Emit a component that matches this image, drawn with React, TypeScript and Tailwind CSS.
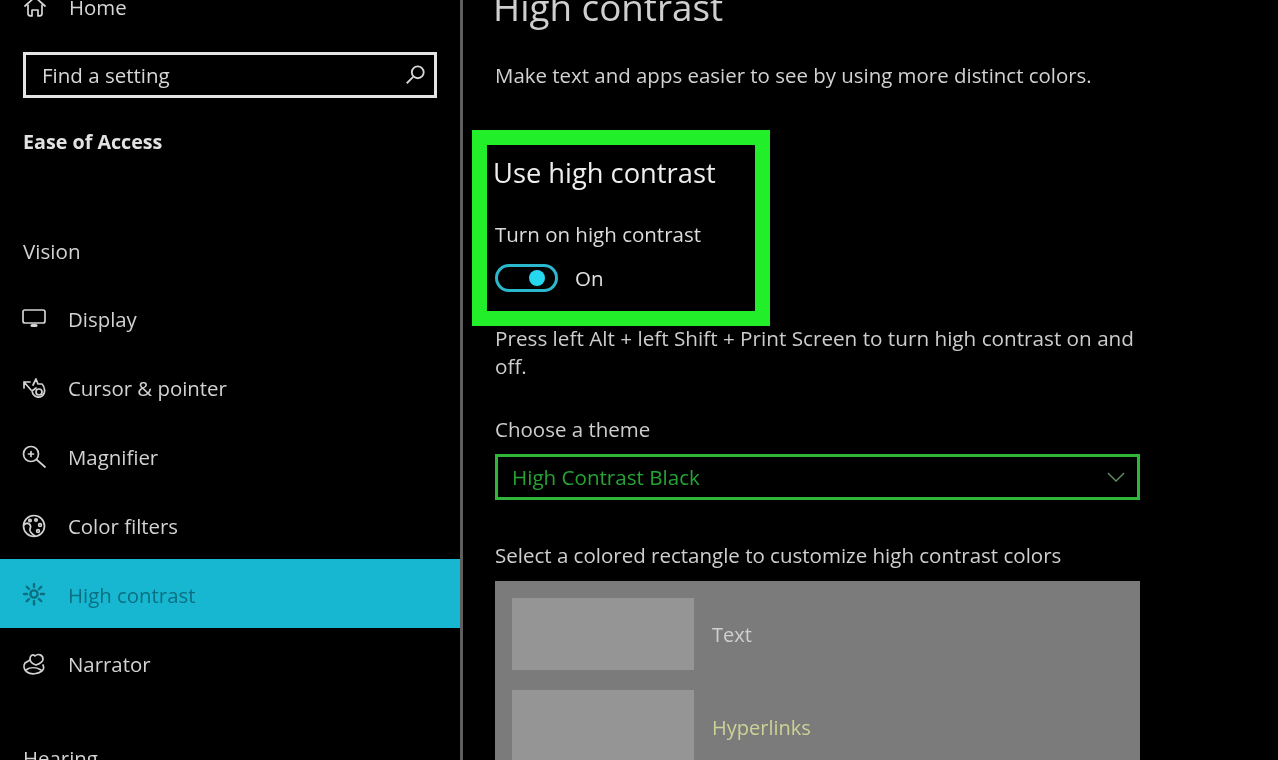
import React from "react";

const font = { fontFamily: '"Open Sans", "Noto Sans", sans-serif' };

const Svg = ({ children, className = "" }: { children: React.ReactNode; className?: string }) => (
  <svg viewBox="0 0 24 24" fill="none" stroke="currentColor" strokeWidth="1.7" strokeLinecap="round" strokeLinejoin="round" className={"w-[24px] h-[24px] shrink-0 " + className}>
    {children}
  </svg>
);

const HomeIcon = () => (
  <Svg><path d="M2 11 L12 2 L22 11" /><path d="M5 10 V19 C5 21 7 21 9 21 V15 H15 V21 C17 21 19 21 19 19 V10" /></Svg>
);
const DisplayIcon = () => (
  <Svg>
    <rect x="1" y="3" width="22" height="13" rx="2" />
    <path d="M10 18.5 H14" strokeWidth="3" />
  </Svg>
);
const CursorIcon = () => (
  <Svg>
    <path d="M2 6 L9 14 M2 6 V12 M2 6 H8" />
    <path d="M11 9 L14 3 L16 8 L20 8 C23 11 24 17 20 20 C17 22 13 21 11 18 L10 15 L14 12" />
    <circle cx="17" cy="16" r="3" />
  </Svg>
);
const MagnifierIcon = () => (
  <Svg>
    <circle cx="9" cy="9" r="7.5" />
    <path d="M14.5 14.5 L23 22" />
    <path d="M9 6.5 V11.5 M6.5 9 H11.5" />
  </Svg>
);
const PaletteIcon = () => (
  <Svg>
    <circle cx="12" cy="12" r="10.5" />
    <path d="M2 11 C6 7 10 11 8 15 C7 18 10 20 13 22" />
    <circle cx="8" cy="6.5" r="1.2" /><circle cx="14" cy="6" r="1.2" /><circle cx="18" cy="11" r="1.4" /><circle cx="16" cy="17" r="1.4" />
  </Svg>
);
const SunIcon = () => (
  <svg viewBox="0 0 24 24" fill="none" stroke="currentColor" strokeWidth="2.4" strokeLinecap="round" className="w-[24px] h-[24px] shrink-0">
    <circle cx="12" cy="11" r="3.6" />
    <path d="M12 1 V4 M12 18 V21.5 M2 11 H5 M19 11 H22 M4.8 3.8 L7 6 M17 16 L19.2 18.2 M4.8 18.2 L7 16 M17 6 L19.2 3.8" />
  </svg>
);
const NarratorIcon = () => (
  <Svg>
    <path d="M8 8 L3 11 C1 14 2 18 5 20 C9 23 16 22 20 19 C22 17 22 15 21 13" />
    <path d="M4 18 C8 15 14 15 19 18" />
    <path d="M13 4 C16 1 21 3 21 7 C21 10 17 12 14 13 C11 12 8 10 8 7 C8 3 11 2 13 4 Z" />
  </Svg>
);

const NavItem = ({ icon, label, active }: { icon: React.ReactNode; label: string; active?: boolean }) => (
  <div className={"flex items-center h-[69px] pt-[3px] pl-[22px] " + (active ? "bg-[#17b7d2] text-[#0b6f80]" : "text-[#d2d2d2]")}>
    {icon}
    <span className="ml-[22px] text-[20.4px] leading-none">{label}</span>
  </div>
);

export default function App() {
  return (
    <div style={font} className="w-[1278px] h-[760px] overflow-hidden bg-black flex blur-[0.7px]">
      {/* Sidebar */}
      <aside className="w-[460px] shrink-0 h-[760px] overflow-hidden">
        <div className="flex items-center h-[40px] -mt-[13px] pl-[23px] text-[#d6d6d6]">
          <HomeIcon />
          <span className="ml-[22px] text-[20.4px] leading-none">Home</span>
        </div>
        <div className="mt-[25px] ml-[23px] w-[414px] h-[46px] border-[3px] border-[#e4e4e4] flex items-center justify-between pl-[16px] pr-[8px] text-[#d8d8d8]">
          <span className="text-[20.5px] leading-none">Find a setting</span>
          <svg viewBox="0 0 24 24" fill="none" stroke="currentColor" strokeWidth="2" className="w-[22px] h-[22px]">
            <circle cx="15" cy="9" r="6.5" /><path d="M10 14 L3 21" />
          </svg>
        </div>
        <div className="mt-[30px] ml-[23px] text-[19.7px] leading-[27px] font-bold text-[#e2e2e2]">Ease of Access</div>
        <div className="mt-[83px] ml-[23px] text-[20.6px] leading-[27px] text-[#d2d2d2]">Vision</div>
        <div className="mt-[18px]">
          <NavItem icon={<DisplayIcon />} label="Display" />
          <NavItem icon={<CursorIcon />} label="Cursor & pointer" />
          <NavItem icon={<MagnifierIcon />} label="Magnifier" />
          <NavItem icon={<PaletteIcon />} label="Color filters" />
          <NavItem icon={<SunIcon />} label="High contrast" active />
          <NavItem icon={<NarratorIcon />} label="Narrator" />
        </div>
        <div className="mt-[48px] ml-[23px] text-[20.4px] leading-[27px] text-[#d2d2d2]">Hearing</div>
      </aside>

      {/* Divider */}
      <div className="w-[3px] h-[760px] shrink-0 bg-[#5e5e5e]" />

      {/* Main */}
      <main className="flex-1 h-[760px] overflow-hidden pl-[32px]">
        <h1 className="-mt-[20px] -ml-[2px] text-[36.8px] leading-[54px] text-[#cfcfcf]">High contrast</h1>
        <p className="mt-[28px] text-[20.45px] leading-[27px] text-[#d2d2d2]">Make text and apps easier to see by using more distinct colors.</p>
        <section className="mt-[41px] -ml-[23px] w-[298px] h-[196px] border-[15px] border-[#22ee2a] pl-[6px] flex flex-col">
          <div className="mt-[10px] text-[27.3px] leading-[36px] text-[#eeeeee]">Use high contrast</div>
          <div className="mt-[30px] ml-[2px] text-[20.5px] leading-[27px] text-[#dcdcdc]">Turn on high contrast</div>
          <div className="mt-[16px] ml-[2px] flex items-center">
            <div className="relative w-[63px] h-[28px] rounded-full border-[3px] border-[#2bb8cc]">
              <div className="absolute right-[10px] top-[3px] w-[16px] h-[16px] rounded-full bg-[#27d7f0]" />
            </div>
            <span className="ml-[17px] text-[20.5px] leading-none text-[#e2e2e2]">On</span>
          </div>
        </section>
        <p className="mt-[-2px] w-[650px] text-[20.7px] leading-[28px] text-[#cdcdcd]">Press left Alt + left Shift + Print Screen to turn high contrast on and off.</p>
        <div className="mt-[36px] text-[20.5px] leading-[27px] text-[#cdcdcd]">Choose a theme</div>
        <div className="mt-[11px] w-[645px] h-[46px] border-[3px] border-[#2fb53a] flex items-center justify-between pl-[14px] pr-[12px] text-[#25a334]">
          <span className="text-[20.6px] leading-none">High Contrast Black</span>
          <svg viewBox="0 0 20 12" fill="none" stroke="currentColor" strokeWidth="1.5" className="w-[18px] h-[11px] text-[#5f8f62]">
            <path d="M1 1 L10 10 L19 1" />
          </svg>
        </div>
        <p className="mt-[42px] text-[20.5px] leading-[27px] text-[#cfcfcf]">Select a colored rectangle to customize high contrast colors</p>
        <div className="mt-[12px] w-[645px] h-[220px] bg-[#7b7b7b] pt-[17px] pl-[17px] flex flex-col gap-[20px]">
          <div className="flex items-center">
            <div className="w-[182px] h-[72px] bg-[#959595]" />
            <span className="ml-[18px] mt-[2px] text-[20px] leading-none text-[#cfcfcf]">Text</span>
          </div>
          <div className="flex items-center">
            <div className="w-[182px] h-[76px] bg-[#959595]" />
            <span className="ml-[18px] text-[20px] leading-none text-[#cdd296]">Hyperlinks</span>
          </div>
        </div>
      </main>
    </div>
  );
}
